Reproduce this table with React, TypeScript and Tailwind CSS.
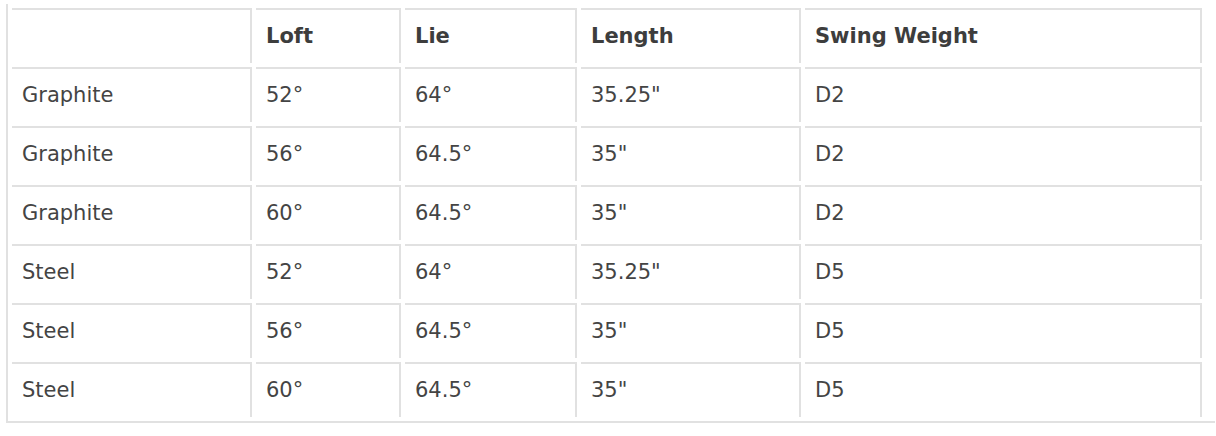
// ============================================================
// Wedge specs table
// ============================================================

const columns = ['', 'Loft', 'Lie', 'Length', 'Swing Weight']

const rows: string[][] = [
  ['Graphite', '52°', '64°', '35.25"', 'D2'],
  ['Graphite', '56°', '64.5°', '35"', 'D2'],
  ['Graphite', '60°', '64.5°', '35"', 'D2'],
  ['Steel', '52°', '64°', '35.25"', 'D5'],
  ['Steel', '56°', '64.5°', '35"', 'D5'],
  ['Steel', '60°', '64.5°', '35"', 'D5'],
]

const cell =
  'border-t-2 border-r-2 border-[#e1e1e1] px-[10px] py-[11px] text-left align-middle leading-[31px]'

export default function App() {
  return (
    <div className="min-h-[436px] bg-white pt-[4px] pl-[6px] font-['DejaVu_Sans',Verdana,sans-serif] text-[21px] text-[#444]">
      <div className="w-[1209px] border-l-2 border-b-2 border-[#e1e1e1]">
        <table className="table-fixed border-separate border-spacing-[4px] w-[1198px]">
          <colgroup>
            <col className="w-[240px]" />
            <col className="w-[145px]" />
            <col className="w-[172px]" />
            <col className="w-[220px]" />
            <col className="w-[397px]" />
          </colgroup>
          <thead>
            <tr>
              {columns.map((c, i) => (
                <th key={i} className={`${cell} font-bold text-[#3d3d3d]`}>
                  {c}
                </th>
              ))}
            </tr>
          </thead>
          <tbody>
            {rows.map((r, ri) => (
              <tr key={ri}>
                {r.map((v, ci) => (
                  <td key={ci} className={`${cell} font-normal`}>
                    {v}
                  </td>
                ))}
              </tr>
            ))}
          </tbody>
        </table>
      </div>
    </div>
  )
}
